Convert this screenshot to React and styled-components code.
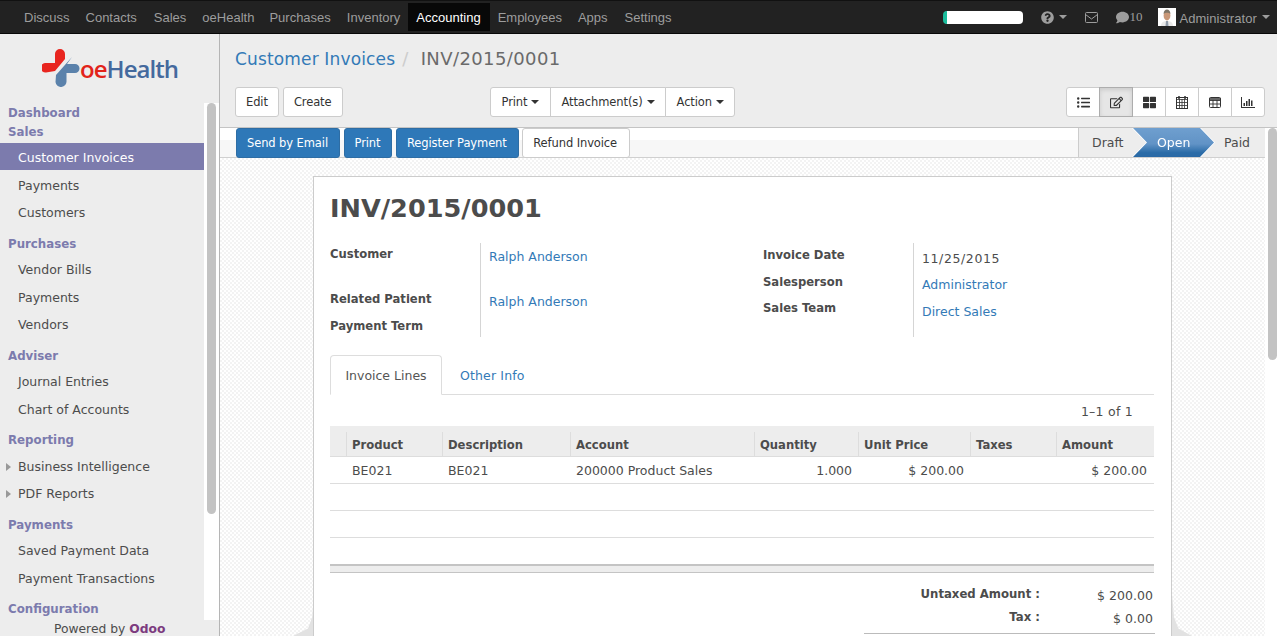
// App.jsx
import React from 'react';
import styled, { createGlobalStyle } from 'styled-components';
import {
  FaQuestionCircle,
  FaComment,
  FaListUl,
  FaRegEdit,
  FaThLarge,
} from 'react-icons/fa';

const uiFont = '"DejaVu Sans", "Liberation Sans", sans-serif';

const GlobalStyle = createGlobalStyle`
  html, body {
    margin: 0;
    height: 100%;
    overflow: hidden;
    background: #ededed;
    font-family: ${uiFont};
    font-size: 12px;
    color: #4c4c4c;
  }
  * { box-sizing: border-box; }
`;

const Page = styled.div`
  width: 1277px;
  height: 636px;
  display: flex;
  flex-direction: column;
  overflow: hidden;
`;

const TopBar = styled.nav`
  height: 34px;
  flex: none;
  display: flex;
  align-items: stretch;
  padding-left: 16px;
  background: #222;
  border-top: 1px solid #111;
  border-bottom: 1px solid #080808;
  font-family: "Liberation Sans", Arial, sans-serif;
  font-size: 13px;
  color: #9d9d9d;
`;

const NavItem = styled.a`
  display: flex;
  align-items: center;
  padding: 0 ${(p) => 8 + (p.$extra ?? 0)}px 0 8px;
  margin: 2px 0;
  color: ${(p) => (p.$active ? '#fff' : '#9d9d9d')};
  background: ${(p) => (p.$active ? '#080808' : 'transparent')};
`;

const NavRight = styled.div`
  margin-left: auto;
  display: flex;
  align-items: center;
  padding-right: 7px;
`;

const Progress = styled.div`
  width: 80px;
  height: 13px;
  margin-right: 18px;
  border-radius: 4px;
  background: #fff;
  border-left: 4px solid #1abc9c;
`;

const NavIcon = styled.span`
  display: flex;
  align-items: center;
  gap: ${(p) => p.$inner ?? 5}px;
  margin-right: ${(p) => p.$gap}px;
`;

const ChatCount = styled.span`
  font-family: "Liberation Serif", serif;
  font-size: 13px;
`;

const Caret = styled.i`
  display: inline-block;
  width: 0;
  height: 0;
  margin-left: ${(p) => p.$gap ?? 4}px;
  border-top: 4px solid currentColor;
  border-left: 4px solid transparent;
  border-right: 4px solid transparent;
`;

const Avatar = styled.svg`
  width: 18px;
  height: 18px;
  margin-right: 3px;
`;

const UserName = styled.span`
  padding-top: 2px;
  letter-spacing: 0.08px;
`;

const Body = styled.div`
  flex: 1;
  min-height: 0;
  display: flex;
`;

const Sidebar = styled.aside`
  position: relative;
  width: 220px;
  flex: none;
  background: #ededed;
  border-right: 1px solid #b5b5b5;
  overflow: hidden;
`;

const SideScroll = styled.div`
  position: absolute;
  top: 69px;
  right: 0;
  width: 15px;
  height: 517px;
  background: #fff;
`;

const SideThumb = styled.div`
  width: 9px;
  height: 411px;
  margin-left: 3px;
  border-radius: 5px;
  background: #c3c3c3;
`;

const LogoRow = styled.div`
  height: 69px;
  display: flex;
  align-items: center;
  padding: 0 0 1px 42px;
`;

const LogoMark = styled.svg`
  width: 38px;
  height: 38px;
  flex: none;
`;

const LogoText = styled.span`
  font-family: "Open Sans", sans-serif;
  font-size: 24px;
  font-weight: 600;
  letter-spacing: -0.95px;
  color: #44699d;
  & b {
    font-weight: 600;
    color: #e2231a;
  }
`;

const SideHeading = styled.div`
  height: 19px;
  margin-top: ${(p) => p.$top}px;
  padding-left: 8px;
  display: flex;
  align-items: center;
  font-size: 11.8px;
  font-weight: 700;
  color: #7c7bad;
`;

const SideLink = styled.a`
  position: relative;
  display: flex;
  align-items: center;
  width: 204px;
  height: 27px;
  margin-top: ${(p) => p.$top}px;
  padding: ${(p) => (p.$active ? 1 : 0)}px 0 0 18px;
  font-size: 12.5px;
  color: ${(p) => (p.$active ? '#fff' : '#4c4c4c')};
  background: ${(p) => (p.$active ? '#7c7bad' : 'transparent')};
  &::before {
    content: '';
    display: ${(p) => (p.$sub ? 'block' : 'none')};
    position: absolute;
    left: 6px;
    top: 50%;
    margin-top: -4px;
    border-left: 5px solid #999;
    border-top: 4px solid transparent;
    border-bottom: 4px solid transparent;
  }
`;

const Powered = styled.div`
  position: absolute;
  left: 0;
  bottom: 0;
  width: 204px;
  padding: 0 0 0 54px;
  height: 14px;
  line-height: 14px;
  font-size: 12.3px;
  background: #ededed;
  & b {
    color: #7c3a7f;
  }
`;

const Main = styled.main`
  flex: 1;
  min-width: 0;
  display: flex;
  flex-direction: column;
`;

const ControlPanel = styled.div`
  height: 94px;
  flex: none;
  padding: 0 12px 0 15px;
  background: #ededed;
  border-bottom: 1px solid #c4c4c4;
`;

const Breadcrumb = styled.div`
  height: 53px;
  padding-bottom: 4px;
  display: flex;
  align-items: center;
  font-size: 18px;
  letter-spacing: 0.4px;
  color: #6a6a6a;
  & a {
    font-size: 17px;
    letter-spacing: 0.15px;
    color: #337ab7;
  }
  & i {
    font-style: normal;
    margin: 0 12px 0 7px;
    color: #ccc;
  }
`;

const ButtonRow = styled.div`
  display: grid;
  grid-template-columns: 255px 576px auto;
  align-items: center;
`;

const Group = styled.div`
  display: flex;
  gap: ${(p) => p.$gap ?? 0}px;
`;

const Button = styled.button`
  height: 30px;
  padding: 0 10px;
  display: flex;
  align-items: center;
  justify-content: center;
  font-family: ${uiFont};
  font-size: 11.5px;
  letter-spacing: -0.1px;
  color: #333;
  background: #fff;
  border: 1px solid #ccc;
  border-radius: 3px;
`;

const Joined = styled(Button)`
  padding: 0 10.5px;
  border-radius: 0;
  margin-left: -1px;
  background: ${(p) => (p.$active ? '#e6e6e6' : '#fff')};
  border-color: ${(p) => (p.$active ? '#adadad' : '#ccc')};
  box-shadow: ${(p) => (p.$active ? 'inset 0 2px 4px rgba(0,0,0,.12)' : 'none')};
  position: relative;
  z-index: ${(p) => (p.$active ? 1 : 0)};
  &:first-child {
    margin-left: 0;
    border-radius: 3px 0 0 3px;
  }
  &:last-child {
    border-radius: 0 3px 3px 0;
  }
`;

const ViewButton = styled(Joined)`
  width: 34px;
  padding: 0;
  font-size: 13px;
`;

const Content = styled.div`
  flex: 1;
  min-height: 0;
  display: flex;
  background: #fff;
`;

const ContentColumn = styled.div`
  flex: 1;
  min-width: 0;
  display: flex;
  flex-direction: column;
`;

const ScrollTrack = styled.div`
  width: 12px;
  flex: none;
  padding-left: 3px;
  background: #fff;
`;

const ScrollThumb = styled.div`
  height: 232px;
  border-radius: 5px;
  background: #c3c3c3;
`;

const StatusBar = styled.div`
  height: 30px;
  flex: none;
  display: flex;
  justify-content: space-between;
  padding-left: 16px;
  background: linear-gradient(#fff 0 12px, #f7f7f7 12px);
  border-bottom: 1px solid #d0d0d0;
`;

const ActionButton = styled.button`
  height: 30px;
  padding: 0 ${(p) => p.$pad ?? 11}px 0 10px;
  font-family: ${uiFont};
  font-size: 11.5px;
  letter-spacing: -0.1px;
  color: ${(p) => (p.$primary ? '#fff' : '#333')};
  background: ${(p) => (p.$primary ? '#2e78b8' : '#fff')};
  border: 1px solid ${(p) => (p.$primary ? '#2e6da4' : '#ccc')};
  border-radius: 3px;
`;

const Steps = styled.div`
  display: flex;
  width: 187px;
  height: 29px;
  background: #ededed;
  border-left: 1px solid #ccc;
`;

const Step = styled.span`
  display: flex;
  align-items: center;
  height: 29px;
  width: ${(p) => p.$w}px;
  padding-left: ${(p) => p.$pad}px;
  font-size: 12.5px;
  color: #4c4c4c;
`;

const StepOutline = styled.div`
  margin-right: -14px;
  z-index: 1;
  filter: drop-shadow(-1px 0 0 #fff) drop-shadow(1px 0 0 #fff);
`;

const StepOn = styled(Step)`
  color: #fff;
  background: linear-gradient(#6f9fcf, #6193c6 55%, #2b6ca8 85%, #2a69a5);
  clip-path: polygon(0 0, calc(100% - 14px) 0, 100% 50%, calc(100% - 14px) 100%, 0 100%, 14px 50%);
`;

const SheetArea = styled.div`
  position: relative;
  flex: 1;
  min-height: 0;
  overflow: hidden;
  padding: 18px 93px 0;
  background: repeating-conic-gradient(#f3f3f3 0 25%, #fff 0 50%) 0 0 / 4px 4px;
  &::before,
  &::after {
    content: '';
    position: absolute;
    bottom: 0;
    width: 20px;
    height: 42px;
    background: #e2e2e2;
  }
  &::before {
    left: 73px;
    clip-path: polygon(100% 30%, 96% 55%, 75% 82%, 0 100%, 100% 100%);
  }
  &::after {
    right: 73px;
    clip-path: polygon(0 0, 10% 55%, 32% 82%, 100% 100%, 0 100%);
  }
`;

const Sheet = styled.div`
  height: 480px;
  padding: 0 17px 0 16px;
  background: #fff;
  border: 1px solid #ccc;
`;

const Title = styled.h1`
  margin: 0;
  height: 63px;
  padding-top: 13px;
  font-size: 25.6px;
  line-height: 36px;
  font-weight: 700;
  color: #4c4c4c;
`;

const FormGroups = styled.div`
  display: grid;
  grid-template-columns: 433px 1fr;
  height: 115px;
  padding-top: 3px;
`;

const FieldGrid = styled.div`
  display: grid;
  grid-template-columns: 150px 1fr;
  grid-template-rows: ${(p) => p.$rows};
  height: 94px;
`;

const FieldLabel = styled.label`
  padding-top: ${(p) => p.$top ?? 4}px;
  font-size: 11.6px;
  font-weight: 700;
  color: #4c4c4c;
`;

const FieldValue = styled.div`
  padding: ${(p) => (p.$top ?? 6)}px 0 0 8px;
  border-left: 1px solid #d5d5d5;
  font-size: 12.5px;
  letter-spacing: ${(p) => p.$spread ?? 0}px;
  color: ${(p) => (p.$link ? '#337ab7' : '#4c4c4c')};
`;

const Tabs = styled.div`
  height: 40px;
  display: flex;
  border-bottom: 1px solid #ddd;
`;

const Tab = styled.a`
  height: ${(p) => (p.$active ? 40 : 39)}px;
  width: ${(p) => (p.$active ? '112px' : 'auto')};
  padding: ${(p) => (p.$active ? '0' : '1px 18px 0')};
  display: flex;
  align-items: center;
  justify-content: center;
  font-size: 12.5px;
  letter-spacing: ${(p) => (p.$active ? 0 : 0.15)}px;
  color: ${(p) => (p.$active ? '#555' : '#337ab7')};
  background: #fff;
  border: ${(p) => (p.$active ? '1px solid #ddd' : 'none')};
  border-bottom: ${(p) => (p.$active ? '1px solid #fff' : 'none')};
  border-radius: 4px 4px 0 0;
`;

const Pager = styled.div`
  height: 31px;
  padding: 9px 21px 0 0;
  text-align: right;
  font-size: 12.5px;
  letter-spacing: 0.25px;
  line-height: 15px;
`;

const LinesTable = styled.table`
  width: 824px;
  table-layout: fixed;
  border-collapse: collapse;
  font-size: 12.5px;
  & th {
    position: relative;
    height: 30px;
    padding: 9px 6px 0;
    vertical-align: middle;
    background: #ededed;
    font-size: 11.6px;
    font-weight: 700;
    text-align: left;
    border-bottom: 1px solid #ddd;
  }
  & th + th::before {
    content: '';
    position: absolute;
    left: 0;
    top: 6px;
    bottom: 0;
    width: 1px;
    background: #ddd;
  }
  & td {
    height: 27px;
    padding: 1px 6px 0;
    white-space: nowrap;
    border-bottom: 1px solid #ddd;
  }
  & tbody tr:last-child td {
    height: 28px;
  }
  & td.num {
    text-align: right;
  }
  & td.num:last-child {
    padding-right: 7px;
  }
  & tfoot td {
    height: 7px;
    padding: 0;
    background: #ededed;
    border-top: 2px solid #c4c4c4;
    border-bottom: 1px solid #c4c4c4;
  }
`;

const Totals = styled.div`
  display: grid;
  grid-template-columns: 710px 114px;
  grid-auto-rows: 23px;
  width: 825px;
  padding-top: 14px;
`;

const TotalLabel = styled.div`
  text-align: right;
  font-size: 11.7px;
  font-weight: 700;
`;

const TotalValue = styled.div`
  padding: 1px 1px 0 0;
  text-align: right;
  font-size: 12.5px;
  letter-spacing: 0.05px;
`;

const TotalRule = styled.div`
  grid-column: 1 / 3;
  width: 291px;
  height: 1px;
  margin-left: 534px;
  background: #bbb;
`;

const navItems = [
  { name: 'Discuss' },
  { name: 'Contacts', extra: 1 },
  { name: 'Sales' },
  { name: 'oeHealth', extra: -1 },
  { name: 'Purchases' },
  { name: 'Inventory' },
  { name: 'Accounting', extra: 1 },
  { name: 'Employees' },
  { name: 'Apps', extra: 1 },
  { name: 'Settings' },
];

const sideMenu = [
  { head: 'Dashboard', top: 0 },
  { head: 'Sales', top: 0 },
  { link: 'Customer Invoices', top: 2, active: true },
  { link: 'Payments', top: 2 },
  { link: 'Customers', top: 0 },
  { head: 'Purchases', top: 8 },
  { link: 'Vendor Bills', top: 3 },
  { link: 'Payments', top: 1 },
  { link: 'Vendors', top: 0 },
  { head: 'Adviser', top: 8 },
  { link: 'Journal Entries', top: 3 },
  { link: 'Chart of Accounts', top: 1 },
  { head: 'Reporting', top: 7 },
  { link: 'Business Intelligence', top: 4, sub: true },
  { link: 'PDF Reports', top: 0, sub: true },
  { head: 'Payments', top: 8 },
  { link: 'Saved Payment Data', top: 3 },
  { link: 'Payment Transactions', top: 1 },
  { head: 'Configuration', top: 7 },
];

const columns = [16, 96, 128, 184, 104, 112, 86, 98];

const CalendarIcon = () => (
  <svg width="12" height="13" viewBox="0 0 12 13" fill="none" stroke="#333">
    <rect x="0.500" y="1.500" width="11" height="11" />
    <path d="M0 3.500H12M0 6.500H12M0 9.500H12M3.500 3V13M6 3V13M8.500 3V13" strokeWidth="0.800" />
    <path d="M3 0V3M9 0V3" strokeWidth="1.500" />
  </svg>
);

const TableIcon = () => (
  <svg width="12" height="11" viewBox="0 0 12 11" fill="none" stroke="#333">
    <rect x="0.500" y="0.500" width="11" height="10" rx="1" />
    <path d="M0 3.500H12M0 7H12M4 3V11M8 3V11" strokeWidth="0.900" />
    <path d="M0 2H12" strokeWidth="1.500" />
  </svg>
);

const ChartIcon = () => (
  <svg width="14" height="11" viewBox="0 0 14 11" fill="#333">
    <path d="M0 0H1V10H14V11H0z" />
    <path d="M2.500 6H4V9H2.500zM5 4H6.500V9H5zM7.500 2H9V9H7.500zM10 3.500H11.500V9H10z" />
  </svg>
);

const App = () => (
  <Page>
    <GlobalStyle />
    <TopBar>
      {navItems.map((item) => (
        <NavItem key={item.name} $extra={item.extra} $active={item.name === 'Accounting'}>{item.name}</NavItem>
      ))}
      <NavRight>
        <Progress />
        <NavIcon $gap={18}>
          <FaQuestionCircle size={13} />
          <Caret $gap={0} />
        </NavIcon>
        <NavIcon $gap={18}>
          <svg width="13" height="11" viewBox="0 0 13 11" fill="none" stroke="currentColor">
            <rect x="0.500" y="0.500" width="12" height="10" rx="1" />
            <path d="M0.500 2.500 L6.500 7 L12.500 2.500" />
          </svg>
        </NavIcon>
        <NavIcon $gap={16} $inner={0}>
          <FaComment size={13} />
          <ChatCount>10</ChatCount>
        </NavIcon>
        <Avatar viewBox="0 0 18 18">
          <rect width="18" height="18" fill="#fff" />
          <path d="M3 18c0-4 3-5 6-5s6 1 6 5z" fill="#e9e9e9" />
          <path d="M8 13h2l.5 5h-3z" fill="#8f9aa8" />
          <ellipse cx="9" cy="7.500" rx="3.400" ry="5" fill="#c99878" />
          <path d="M5.600 6c0-3 1.500-4.500 3.400-4.500S12.400 3 12.400 6c-1-1.800-5.800-1.800-6.800 0z" fill="#7d7466" />
        </Avatar>
        <UserName>Administrator</UserName>
        <Caret $gap={5} />
      </NavRight>
    </TopBar>
    <Body>
      <Sidebar>
        <LogoRow>
          <LogoMark viewBox="0 0 38 38">
            <path d="M3 14H13V5a5 5 0 0 1 10 0V10L13 22L4 23.500a4.700 4.700 0 0 1-1-9.500z" fill="#e8251f" />
            <path d="M30 8L25 15H33a4.500 4.500 0 0 1 0 9H24.500V32a5.500 5.500 0 0 1-11 1L14 26z" fill="#5b82ab" />
          </LogoMark>
          <LogoText><b>oe</b>Health</LogoText>
        </LogoRow>
        {sideMenu.map((row, i) =>
          row.head ? (
            <SideHeading key={i} $top={row.top}>{row.head}</SideHeading>
          ) : (
            <SideLink key={i} $top={row.top} $active={row.active} $sub={row.sub}>{row.link}</SideLink>
          ),
        )}
        <SideScroll><SideThumb /></SideScroll>
        <Powered>Powered by <b>Odoo</b></Powered>
      </Sidebar>
      <Main>
        <ControlPanel>
          <Breadcrumb>
            <a>Customer Invoices</a>
            <i>/</i>
            INV/2015/0001
          </Breadcrumb>
          <ButtonRow>
            <Group $gap={4}>
              <Button>Edit</Button>
              <Button>Create</Button>
            </Group>
            <Group>
              <Joined>Print<Caret /></Joined>
              <Joined>Attachment(s)<Caret /></Joined>
              <Joined>Action<Caret /></Joined>
            </Group>
            <Group>
              <ViewButton><FaListUl /></ViewButton>
              <ViewButton $active><FaRegEdit /></ViewButton>
              <ViewButton><FaThLarge /></ViewButton>
              <ViewButton><CalendarIcon /></ViewButton>
              <ViewButton><TableIcon /></ViewButton>
              <ViewButton><ChartIcon /></ViewButton>
            </Group>
          </ButtonRow>
        </ControlPanel>
        <Content>
          <ContentColumn>
            <StatusBar>
              <Group $gap={3.5}>
                <ActionButton $primary>Send by Email</ActionButton>
                <ActionButton $primary>Print</ActionButton>
                <ActionButton $primary>Register Payment</ActionButton>
                <ActionButton $pad={12}>Refund Invoice</ActionButton>
              </Group>
              <Steps>
                <Step $w={54} $pad={13}>Draft</Step>
                <StepOutline>
                  <StepOn $w={81} $pad={24}>Open</StepOn>
                </StepOutline>
                <Step $w={52} $pad={24}>Paid</Step>
              </Steps>
            </StatusBar>
            <SheetArea>
              <Sheet>
                <Title>INV/2015/0001</Title>
                <FormGroups>
                  <FieldGrid $rows="45px 27px 22px">
                    <FieldLabel>Customer</FieldLabel>
                    <FieldValue $link>Ralph Anderson</FieldValue>
                    <FieldLabel>Related Patient</FieldLabel>
                    <FieldValue $link>Ralph Anderson</FieldValue>
                    <FieldLabel>Payment Term</FieldLabel>
                    <FieldValue />
                  </FieldGrid>
                  <FieldGrid $rows="27px 26px 41px">
                    <FieldLabel $top={5}>Invoice Date</FieldLabel>
                    <FieldValue $top={8} $spread={0.6}>11/25/2015</FieldValue>
                    <FieldLabel $top={5}>Salesperson</FieldLabel>
                    <FieldValue $link $top={7}>Administrator</FieldValue>
                    <FieldLabel $top={5}>Sales Team</FieldLabel>
                    <FieldValue $link $top={8}>Direct Sales</FieldValue>
                  </FieldGrid>
                </FormGroups>
                <Tabs>
                  <Tab $active>Invoice Lines</Tab>
                  <Tab>Other Info</Tab>
                </Tabs>
                <Pager>1–1 of 1</Pager>
                <LinesTable>
                  <colgroup>
                    {columns.map((w, i) => <col key={i} width={w} />)}
                  </colgroup>
                  <thead>
                    <tr>
                      <th />
                      <th>Product</th>
                      <th>Description</th>
                      <th>Account</th>
                      <th>Quantity</th>
                      <th>Unit Price</th>
                      <th>Taxes</th>
                      <th>Amount</th>
                    </tr>
                  </thead>
                  <tbody>
                    <tr>
                      <td />
                      <td>BE021</td>
                      <td>BE021</td>
                      <td>200000 Product Sales</td>
                      <td className="num">1.000</td>
                      <td className="num">$ 200.00</td>
                      <td />
                      <td className="num">$ 200.00</td>
                    </tr>
                    {[0, 1, 2].map((i) => (
                      <tr key={i}><td colSpan={8} /></tr>
                    ))}
                  </tbody>
                  <tfoot>
                    <tr><td colSpan={8} /></tr>
                  </tfoot>
                </LinesTable>
                <Totals>
                  <TotalLabel>Untaxed Amount :</TotalLabel>
                  <TotalValue>$ 200.00</TotalValue>
                  <TotalLabel>Tax :</TotalLabel>
                  <TotalValue>$ 0.00</TotalValue>
                  <TotalRule />
                </Totals>
              </Sheet>
            </SheetArea>
          </ContentColumn>
          <ScrollTrack><ScrollThumb /></ScrollTrack>
        </Content>
      </Main>
    </Body>
  </Page>
);

export default App;
